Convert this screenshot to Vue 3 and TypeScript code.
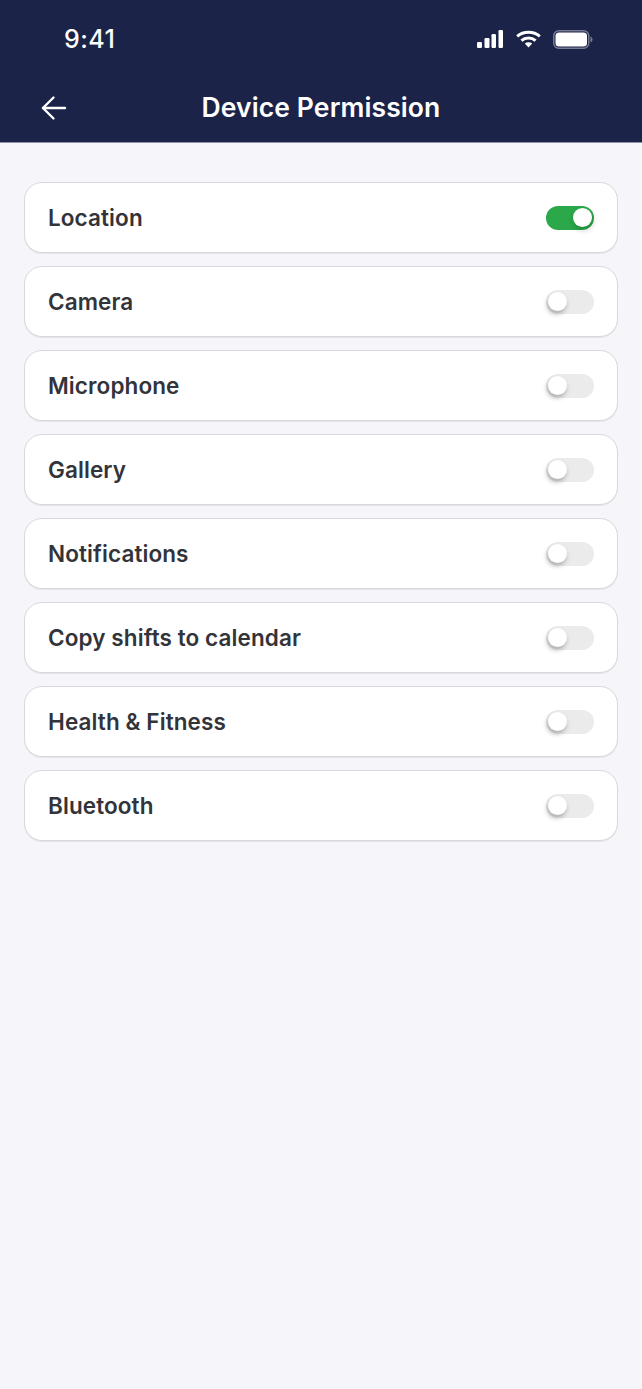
<template>
  <div class="screen">
    <header class="header">
      <div class="status-bar">
        <span class="time">9:41</span>
        <div class="status-icons">
          <svg width="27" height="18" viewBox="0 0 27 18" fill="#fff">
            <rect x="0" y="12" width="5" height="6" rx="1.200" />
            <rect x="7.500" y="8" width="5" height="10" rx="1.200" />
            <rect x="14.500" y="4" width="4.500" height="14" rx="1.200" />
            <rect x="21.500" y="0" width="4.500" height="18" rx="1.200" />
          </svg>
          <svg width="25" height="18" viewBox="0 0 25 18" fill="none" stroke="#fff" stroke-width="3">
            <path d="M1.200 6.300C7.500 .8 17.500 .8 23.800 6.300" />
            <path d="M5.400 10.600C9.500 7 15.500 7 19.600 10.600" />
            <path d="M12.500 17.500l-3.700-4c2.200-1.700 5.200-1.700 7.400 0z" fill="#fff" stroke="none" />
          </svg>
          <svg width="40" height="19" viewBox="0 0 40 19" fill="none">
            <rect x="0.750" y="0.750" width="35" height="17.500" rx="5" stroke="#fff" stroke-opacity="0.4" stroke-width="1.500" />
            <rect x="2.500" y="2.500" width="31.500" height="14" rx="3.500" fill="#fff" />
            <path d="M37.500 6.500v6c1.200-.4 2-1.700 2-3s-.8-2.600-2-3z" fill="#fff" fill-opacity="0.4" />
          </svg>
        </div>
      </div>
      <div class="nav">
        <button class="back" type="button" aria-label="Back">
          <svg width="26" height="26" viewBox="0 0 26 26" fill="none" stroke="#fff" stroke-width="2.400" stroke-linecap="round" stroke-linejoin="round">
            <path d="M24 13H2" />
            <path d="M12.500 2.500L2 13l10.500 10.500" />
          </svg>
        </button>
        <h1 class="title">Device Permission</h1>
      </div>
    </header>

    <main class="list">
      <div v-for="item in permissions" :key="item.label" class="row">
        <span class="label">{{ item.label }}</span>
        <span class="switch" :class="{ on: item.on }"><span class="knob"></span></span>
      </div>
    </main>
  </div>
</template>

<script setup lang="ts">
interface Permission {
  label: string
  on: boolean
}

const permissions: Permission[] = [
  { label: 'Location', on: true },
  { label: 'Camera', on: false },
  { label: 'Microphone', on: false },
  { label: 'Gallery', on: false },
  { label: 'Notifications', on: false },
  { label: 'Copy shifts to calendar', on: false },
  { label: 'Health & Fitness', on: false },
  { label: 'Bluetooth', on: false }
]
</script>

<style>
html,
body {
  margin: 0;
  background: #f5f5fa;
}
</style>

<style scoped>
.screen {
  min-height: 1389px;
  background: #f5f5fa;
  font-family: Inter, "Open Sans", sans-serif;
}

.header {
  height: 142px;
  background: #1c2349;
  border-bottom: 1px solid #8c8fa6;
}

.status-bar {
  display: flex;
  align-items: center;
  justify-content: space-between;
  height: 78px;
  padding: 0 49px 0 64px;
}

.time {
  color: #fff;
  font-size: 25px;
  font-weight: 500;
  letter-spacing: 0.5px;
}

.status-icons {
  display: flex;
  align-items: center;
  gap: 12px;
}

.nav {
  position: relative;
  display: flex;
  align-items: center;
  justify-content: center;
  height: 58px;
}

.back {
  position: absolute;
  left: 41px;
  top: 17px;
  display: flex;
  padding: 0;
  border: 0;
  background: none;
}

.title {
  margin: 0;
  color: #fff;
  font-size: 26.500px;
  font-weight: 600;
  letter-spacing: 0.1px;
}

.list {
  display: flex;
  flex-direction: column;
  gap: 13px;
  padding: 39px 24px 0;
}

.row {
  display: flex;
  align-items: center;
  justify-content: space-between;
  height: 71px;
  box-sizing: border-box;
  padding: 0 23px;
  background: #fff;
  border: 1px solid #d9d9dd;
  border-radius: 18px;
  box-shadow: 0 1px 0 #e6e6ea;
}

.label {
  padding-bottom: 1px;
  color: #32343a;
  font-size: 22.500px;
  font-weight: 600;
  letter-spacing: 0.1px;
}

.switch {
  position: relative;
  width: 48px;
  height: 24px;
  border-radius: 12px;
  background: #ebebeb;
}

.switch.on {
  background: #2aa84a;
}

.knob {
  position: absolute;
  top: 2.500px;
  left: 2px;
  width: 19px;
  height: 19px;
  border-radius: 50%;
  background: #fff;
  box-shadow: -1px 3px 5px rgba(0, 0, 0, 0.28);
}

.switch.on .knob {
  left: 27px;
  box-shadow: 1px 3px 6px rgba(0, 0, 0, 0.2);
}
</style>
